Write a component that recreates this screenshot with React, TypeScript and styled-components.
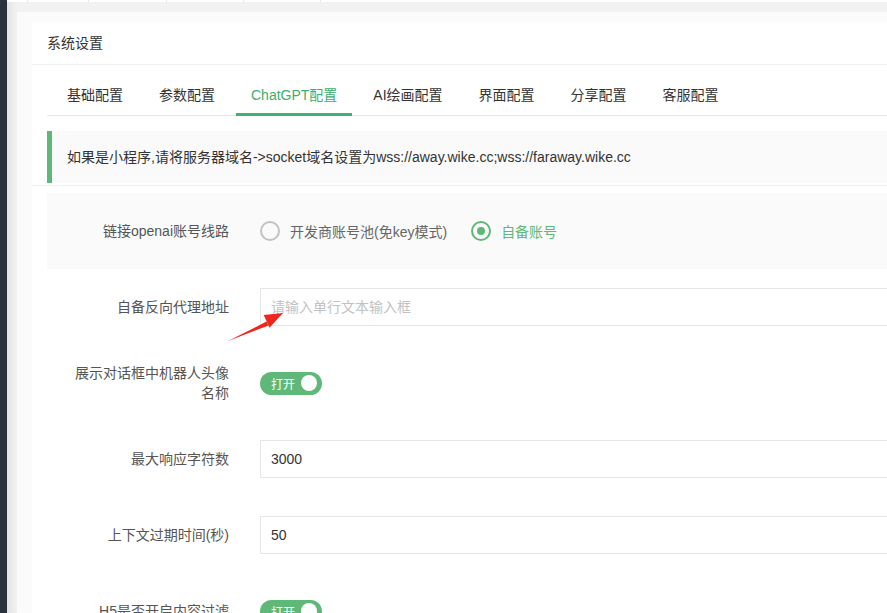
import React from "react";
import styled, { createGlobalStyle } from "styled-components";

const GlobalStyle = createGlobalStyle`
  html, body {
    margin: 0;
    padding: 0;
    overflow: hidden;
    background: #f2f2f2;
  }
  body {
    font-family: "Liberation Sans", "Noto Sans CJK SC", sans-serif;
    font-size: 14px;
    color: #333;
  }
  * {
    box-sizing: border-box;
  }
`;

const tabs = ["基础配置", "参数配置", "ChatGPT配置", "AI绘画配置", "界面配置", "分享配置", "客服配置"];
const topCells = [21, 61, 78, 77, 77];

const Layout = styled.div`
  display: flex;
  width: 1300px;
  height: 100vh;
`;

const Sidebar = styled.div`
  width: 7px;
  flex-shrink: 0;
  background: #28333e;
`;

const Main = styled.div`
  flex: 1;
  background: #f2f2f2;
  box-shadow: inset 8px 0 8px -4px rgba(0, 0, 0, 0.07);
`;

const TopStrip = styled.div`
  display: flex;
  height: 2px;
  background: #fff;
`;

const TopCell = styled.div<{ $w: number }>`
  width: ${(p) => p.$w}px;
  border-right: 1px solid #e8e8e8;
`;

const Wrapper = styled.div`
  margin: 10px 0 0 10px;
  padding: 10px 15px 0;
  background: #fbfbfb;
  min-height: 100vh;
`;

const Card = styled.div`
  background: #fff;
`;

const CardHeader = styled.div`
  height: 43px;
  line-height: 42px;
  padding: 0 15px;
  border-bottom: 1px solid #f2f2f2;
  color: #333;
`;

const CardBody = styled.div`
  padding: 10px 15px;
`;

const TabBar = styled.ul`
  display: flex;
  gap: 6px;
  margin: 0;
  padding: 0 0 0 5px;
  list-style: none;
  height: 41px;
  border-bottom: 1px solid #e6e6e6;
`;

const Tab = styled.li<{ $active?: boolean }>`
  position: relative;
  padding: 0 15px;
  height: 40px;
  line-height: 40px;
  color: ${(p) => (p.$active ? "#3dae6c" : "#333")};
  &::after {
    content: "";
    display: ${(p) => (p.$active ? "block" : "none")};
    position: absolute;
    left: 0;
    right: 0;
    bottom: -1px;
    height: 3px;
    background: #3cb371;
  }
`;

const TabContent = styled.div`
  padding-top: 15px;
`;

const Notice = styled.div`
  padding: 15px;
  line-height: 22px;
  border-left: 5px solid #5fb878;
  background: #fafafa;
  color: #333;
`;

const Divider = styled.div`
  height: 1px;
  margin: 2px 0 0 -15px;
  background: #eeeeee;
`;

const Form = styled.div`
  position: relative;
  margin-top: 7px;
`;

const Row = styled.div<{ $hover?: boolean }>`
  display: flex;
  align-items: center;
  height: 76px;
  background: ${(p) => (p.$hover ? "#fafafa" : "#fff")};
`;

const Label = styled.div`
  width: 197px;
  flex-shrink: 0;
  padding: 0 15px 0 22px;
  text-align: right;
  line-height: 20px;
  color: #555;
`;

const Control = styled.div`
  flex: 1;
  display: flex;
  align-items: center;
  margin-left: 16px;
  min-height: 38px;
`;

const Input = styled.input`
  flex: 1;
  height: 38px;
  padding: 0 10px;
  border: 1px solid #e6e6e6;
  background: #fff;
  font-family: inherit;
  font-size: 14px;
  color: #333;
  outline: none;
  &::placeholder {
    color: #c2c2c2;
  }
`;

const RadioOption = styled.div<{ $checked?: boolean }>`
  display: flex;
  align-items: center;
  margin-right: 24px;
  color: ${(p) => (p.$checked ? "#5fb878" : "#666")};
`;

const RadioIcon = styled.span<{ $checked?: boolean }>`
  position: relative;
  width: 20px;
  height: 20px;
  margin-right: 10px;
  border-radius: 50%;
  border: 2px solid ${(p) => (p.$checked ? "#5fb878" : "#c2c2c2")};
  &::after {
    content: "";
    display: ${(p) => (p.$checked ? "block" : "none")};
    position: absolute;
    left: 50%;
    top: 50%;
    width: 8px;
    height: 8px;
    margin: -4px 0 0 -4px;
    border-radius: 50%;
    background: #5fb878;
  }
`;

const Switch = styled.div`
  display: flex;
  align-items: center;
  justify-content: space-between;
  width: 62px;
  height: 23px;
  padding: 0 5px 0 11px;
  border-radius: 12px;
  background: #5fb878;
  color: #fff;
  font-size: 12px;
`;

const Knob = styled.span`
  width: 16px;
  height: 16px;
  border-radius: 50%;
  background: #fff;
`;

const Arrow = styled.svg`
  position: absolute;
  left: 181px;
  top: 115px;
  pointer-events: none;
`;

const RadioGroup = () => (
  <>
    <RadioOption>
      <RadioIcon />
      开发商账号池(免key模式)
    </RadioOption>
    <RadioOption $checked>
      <RadioIcon $checked />
      自备账号
    </RadioOption>
  </>
);

const OnSwitch = () => (
  <Switch>
    打开
    <Knob />
  </Switch>
);

export default function App() {
  return (
    <>
      <GlobalStyle />
      <Layout>
        <Sidebar />
        <Main>
          <TopStrip>
            {topCells.map((w, i) => (
              <TopCell key={i} $w={w} />
            ))}
          </TopStrip>
          <Wrapper>
            <Card>
              <CardHeader>系统设置</CardHeader>
              <CardBody>
                <TabBar>
                  {tabs.map((t) => (
                    <Tab key={t} $active={t === "ChatGPT配置"}>
                      {t}
                    </Tab>
                  ))}
                </TabBar>
                <TabContent>
                  <Notice>
                    如果是小程序,请将服务器域名-&gt;socket域名设置为wss://away.wike.cc;wss://faraway.wike.cc
                  </Notice>
                  <Divider />
                  <Form>
                    <Row $hover>
                      <Label>链接openai账号线路</Label>
                      <Control>
                        <RadioGroup />
                      </Control>
                    </Row>
                    <Row>
                      <Label>自备反向代理地址</Label>
                      <Control>
                        <Input placeholder="请输入单行文本输入框" />
                      </Control>
                    </Row>
                    <Row>
                      <Label>展示对话框中机器人头像名称</Label>
                      <Control>
                        <OnSwitch />
                      </Control>
                    </Row>
                    <Row>
                      <Label>最大响应字符数</Label>
                      <Control>
                        <Input defaultValue="3000" />
                      </Control>
                    </Row>
                    <Row>
                      <Label>上下文过期时间(秒)</Label>
                      <Control>
                        <Input defaultValue="50" />
                      </Control>
                    </Row>
                    <Row>
                      <Label>H5是否开启内容过滤</Label>
                      <Control>
                        <OnSwitch />
                      </Control>
                    </Row>
                    <Arrow width="60" height="36" viewBox="0 0 60 36">
                      <polygon points="0,33 38.5,13.6 40.5,17.4" fill="#f0261e" />
                      <polygon points="55,5 35.7,7 41.5,19.8" fill="#f0261e" />
                    </Arrow>
                  </Form>
                </TabContent>
              </CardBody>
            </Card>
          </Wrapper>
        </Main>
      </Layout>
    </>
  );
}
